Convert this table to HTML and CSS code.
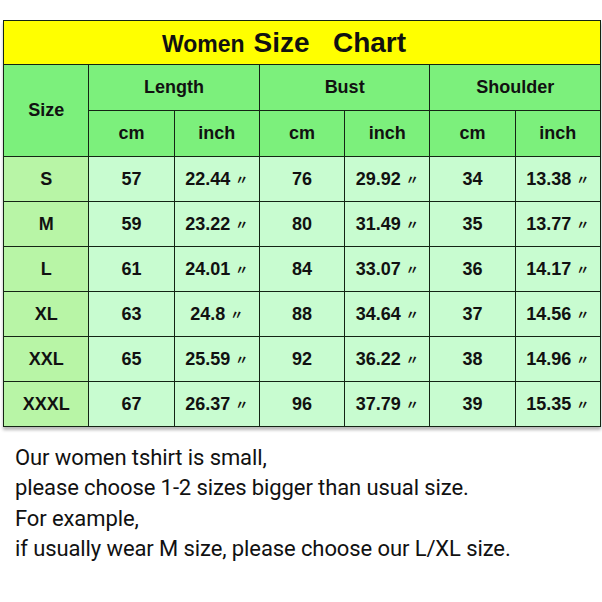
FILE: index.html
```html
<!DOCTYPE html>
<html>
<head>
<meta charset="utf-8">
<link rel="stylesheet" href="styles.css">
</head>
<body>
<div class="wrap">
  <table class="chart">
    <tr class="title-row">
      <td colspan="7" class="title"><span class="t-small">Women</span>&nbsp;<span class="t-big">Size&nbsp;&nbsp;&nbsp;Chart</span></td>
    </tr>
    <tr class="h1">
      <td rowspan="2" class="head">Size</td>
      <td colspan="2" class="head">Length</td>
      <td colspan="2" class="head">Bust</td>
      <td colspan="2" class="head">Shoulder</td>
    </tr>
    <tr class="h2">
      <td class="head">cm</td><td class="head">inch</td>
      <td class="head">cm</td><td class="head">inch</td>
      <td class="head">cm</td><td class="head">inch</td>
    </tr>
    <tr><td class="sz">S</td><td>57</td><td>22.44 <i class="q">〃</i></td><td>76</td><td>29.92 <i class="q">〃</i></td><td>34</td><td>13.38 <i class="q">〃</i></td></tr>
    <tr><td class="sz">M</td><td>59</td><td>23.22 <i class="q">〃</i></td><td>80</td><td>31.49 <i class="q">〃</i></td><td>35</td><td>13.77 <i class="q">〃</i></td></tr>
    <tr><td class="sz">L</td><td>61</td><td>24.01 <i class="q">〃</i></td><td>84</td><td>33.07 <i class="q">〃</i></td><td>36</td><td>14.17 <i class="q">〃</i></td></tr>
    <tr><td class="sz">XL</td><td>63</td><td>24.8 <i class="q">〃</i></td><td>88</td><td>34.64 <i class="q">〃</i></td><td>37</td><td>14.56 <i class="q">〃</i></td></tr>
    <tr><td class="sz">XXL</td><td>65</td><td>25.59 <i class="q">〃</i></td><td>92</td><td>36.22 <i class="q">〃</i></td><td>38</td><td>14.96 <i class="q">〃</i></td></tr>
    <tr><td class="sz">XXXL</td><td>67</td><td>26.37 <i class="q">〃</i></td><td>96</td><td>37.79 <i class="q">〃</i></td><td>39</td><td>15.35 <i class="q">〃</i></td></tr>
  </table>
  <div class="note">
    <p>Our women tshirt is small,</p>
    <p>please choose 1-2 sizes bigger than usual size.</p>
    <p>For example,</p>
    <p>if usually wear M size, please choose our L/XL size.</p>
  </div>
</div>
</body>
</html>
```
FILE: styles.css
```css
html, body {
  margin: 0;
  padding: 0;
  background: #ffffff;
}
.wrap {
  padding: 20px 1px 0 3px;
}
.chart {
  width: 598px;
  border-collapse: collapse;
  table-layout: fixed;
  font-family: "Liberation Sans", Arial, sans-serif;
  font-weight: bold;
  color: #111;
  box-shadow: 0 3px 3px rgba(0, 0, 0, 0.28);
}
.chart td {
  border: 1px solid #142414;
  text-align: center;
  vertical-align: middle;
  padding: 0;
  height: 44px;
  font-size: 18px;
  background: #c8fcd0;
}
.chart .title-row td {
  height: 43px;
  background: #ffff00;
  padding-right: 36px;
}
.chart td.head {
  background: #7cf07c;
  height: 45px;
}
.chart td.sz {
  background: #b8f5a6;
}
.t-small {
  font-size: 23px;
  margin-right: 4px;
}
.t-big {
  font-size: 28px;
}
.q {
  font-size: 13px;
  font-style: normal;
  font-weight: bold;
  font-family: "Noto Sans CJK SC", sans-serif;
  position: relative;
  top: -1px;
}
.note {
  font-family: Roboto, "Noto Sans", sans-serif;
  font-size: 22px;
  letter-spacing: -0.1px;
  line-height: 30.3px;
  color: #111;
  padding: 16px 0 0 12px;
}
.note p {
  margin: 0;
}
```
